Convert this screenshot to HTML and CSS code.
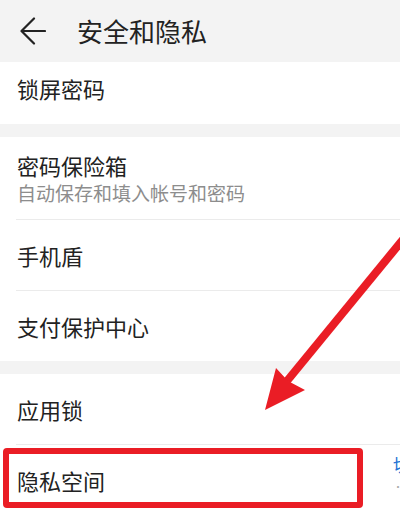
FILE: index.html
```html
<!DOCTYPE html>
<html lang="zh-CN">
<head>
    <meta charset="UTF-8">
    <meta name="viewport" content="width=device-width, initial-scale=1.0">
    <title>安全和隐私</title>
    <link rel="stylesheet" href="styles.css">
</head>
<body>
    <div class="page">
        <header class="top-bar">
            <svg class="back-icon" width="26" height="28" viewBox="0 0 26 28">
                <path d="M25 14H2M14 1.5L1.5 14L14 26.5" fill="none" stroke="#222" stroke-width="2.2" stroke-linecap="round" stroke-linejoin="round"/>
            </svg>
            <h1 class="title">安全和隐私</h1>
        </header>

        <section class="group">
            <div class="row row-first">
                <span class="row-title">锁屏密码</span>
            </div>
        </section>

        <section class="group">
            <div class="row row-tall">
                <div class="row-text">
                    <span class="row-title">密码保险箱</span>
                    <span class="row-sub">自动保存和填入帐号和密码</span>
                </div>
            </div>
            <div class="row">
                <span class="row-title">手机盾</span>
            </div>
            <div class="row">
                <span class="row-title">支付保护中心</span>
            </div>
        </section>

        <section class="group">
            <div class="row">
                <span class="row-title">应用锁</span>
            </div>
            <div class="row">
                <span class="row-title">隐私空间</span>
                <div class="row-side">
                    <span class="side-link">切换</span>
                    <span class="side-note">· · ·</span>
                </div>
            </div>
        </section>

        <!-- annotation overlays -->
        <div class="highlight-box"></div>
        <svg class="arrow" width="400" height="510" viewBox="0 0 400 510">
            <line x1="405" y1="237" x2="287" y2="381" stroke="#ea1d25" stroke-width="8"/>
            <polygon points="265,410 276,368 288,381 305,390" fill="#ea1d25"/>
        </svg>
    </div>
</body>
</html>
```

FILE: styles.css
```css
body {
    margin: 0;
    background-color: #f3f3f3;
    font-family: "Noto Sans CJK SC", "Noto Sans", sans-serif;
    color: #222;
}

.page {
    position: relative;
    width: 400px;
    height: 510px;
    overflow: hidden;
}

.top-bar {
    height: 62px;
    display: flex;
    align-items: center;
    padding-left: 20px;
    background-color: #f3f3f3;
}

.back-icon {
    flex-shrink: 0;
}

.title {
    margin: 0 0 0 31px;
    font-size: 26px;
    font-weight: normal;
    line-height: 30px;
    color: #222;
}

.group {
    background-color: #fff;
    margin-bottom: 13px;
}

.row {
    height: 70px;
    display: flex;
    align-items: center;
    margin-left: 16px;
    padding-left: 1px;
    border-top: 1px solid #ebebeb;
    overflow: hidden;
}

.row:first-child {
    border-top: none;
}

.row-first {
    height: 62px;
    align-items: flex-start;
}

.row-first .row-title {
    padding-top: 12px;
}

.row-tall {
    height: 82px;
}

.row-text {
    display: flex;
    flex-direction: column;
}

.row-title {
    font-size: 22px;
    line-height: 28px;
}

.row-sub {
    font-size: 19px;
    line-height: 24px;
    margin-top: 2px;
    color: #8d8d8d;
}

.row-side {
    margin-left: auto;
    margin-right: -36px;
    width: 43px;
    align-self: flex-start;
    padding-top: 8px;
    display: flex;
    flex-direction: column;
}

.side-link {
    font-size: 18px;
    line-height: 22px;
    color: #2474d4;
    white-space: nowrap;
}

.side-note {
    font-size: 10px;
    line-height: 16px;
    margin-top: 4px;
    color: #aaa;
}

.highlight-box {
    position: absolute;
    left: 3px;
    top: 448px;
    width: 360px;
    height: 60px;
    box-sizing: border-box;
    border: 6px solid #ea1d25;
    border-radius: 4px;
}

.arrow {
    position: absolute;
    left: 0;
    top: 0;
    pointer-events: none;
}
```
